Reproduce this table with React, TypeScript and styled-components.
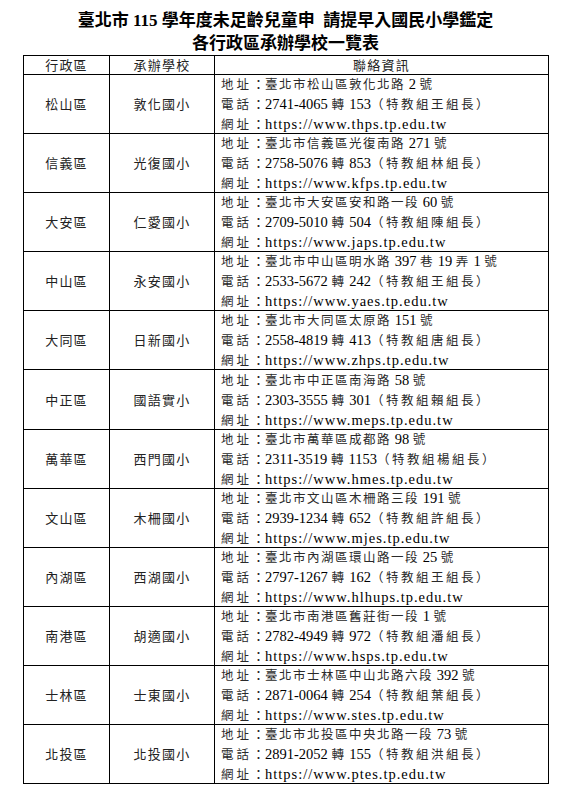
import React from "react";
import styled, { createGlobalStyle } from "styled-components";

const GlobalStyle = createGlobalStyle`
  html, body { margin: 0; padding: 0; background: #ffffff; }
  body { font-family: "Liberation Serif", "Noto Sans CJK TC", serif; color: #000; }
`;

const Page = styled.div`
  width: 525px;
  margin-left: 23px;
  padding-top: 9px;
`;

const Title = styled.h1`
  margin: 0;
  font-family: "Liberation Serif", "Noto Sans CJK TC", serif;
  font-size: 17px;
  line-height: 23px;
  font-weight: 700;
  text-align: center;
  color: #000;
  white-space: pre;
`;

const Grid = styled.div`
  display: grid;
  grid-template-columns: 86px 105px 334px;
  grid-template-rows: 19px;
  grid-auto-rows: 59.1px;
  border-top: 1px solid #000;
  border-left: 1px solid #000;
  box-sizing: border-box;
  width: 526px;
`;

const Cell = styled.div<{ $align?: "center" | "left" }>`
  box-sizing: border-box;
  border-right: 1px solid #000;
  border-bottom: 1px solid #000;
  display: flex;
  flex-direction: column;
  justify-content: center;
  align-items: ${(p) => (p.$align === "left" ? "flex-start" : "center")};
  padding-left: ${(p) => (p.$align === "left" ? "6px" : "0")};
  min-width: 0;
`;

const HeadText = styled.span`
  font-family: "Noto Sans CJK TC", sans-serif;
  font-size: 13px;
  line-height: 16px;
  letter-spacing: 1.2px;
  color: #222;
`;

const NameText = styled.span`
  font-family: "Noto Sans CJK TC", sans-serif;
  font-size: 13px;
  line-height: 16px;
  letter-spacing: 1.2px;
  color: #222;
`;

const Line = styled.div`
  font-family: "Liberation Serif", "Noto Sans CJK TC", serif;
  font-size: 14.5px;
  line-height: 19px;
  color: #000;
  white-space: pre;
`;

const Cjk = styled.span<{ $spacing?: number }>`
  font-family: "Noto Sans CJK TC", sans-serif;
  font-size: 12.5px;
  letter-spacing: ${(p) => p.$spacing ?? 1.5}px;
  color: #2a2a2a;
`;

const Label = styled.span`
  font-family: "Noto Sans CJK TC", sans-serif;
  font-size: 12.5px;
  letter-spacing: 3px;
  color: #2a2a2a;
`;

const Colon = styled.span`
  font-family: "Noto Sans CJK TC", sans-serif;
  font-size: 13px;
  color: #222;
`;

const Url = styled.span`
  letter-spacing: 1px;
  color: #000;
`;

const Note = styled.span`
  font-family: "Noto Sans CJK TC", sans-serif;
  font-size: 12.5px;
  letter-spacing: 2.5px;
  color: #2a2a2a;
`;

type Row = {
  district: string;
  school: string;
  address: string;
  phone: string;
  ext: string;
  contact: string;
  url: string;
};

const rows: Row[] = [
  { district: "松山區", school: "敦化國小", address: "臺北市松山區敦化北路 2 號", phone: "2741-4065", ext: "153", contact: "（特教組王組長）", url: "https://www.thps.tp.edu.tw" },
  { district: "信義區", school: "光復國小", address: "臺北市信義區光復南路 271 號", phone: "2758-5076", ext: "853", contact: "（特教組林組長）", url: "https://www.kfps.tp.edu.tw" },
  { district: "大安區", school: "仁愛國小", address: "臺北市大安區安和路一段 60 號", phone: "2709-5010", ext: "504", contact: "（特教組陳組長）", url: "https://www.japs.tp.edu.tw" },
  { district: "中山區", school: "永安國小", address: "臺北市中山區明水路 397 巷 19 弄 1 號", phone: "2533-5672", ext: "242", contact: "（特教組王組長）", url: "https://www.yaes.tp.edu.tw" },
  { district: "大同區", school: "日新國小", address: "臺北市大同區太原路 151 號", phone: "2558-4819", ext: "413", contact: "（特教組唐組長）", url: "https://www.zhps.tp.edu.tw" },
  { district: "中正區", school: "國語實小", address: "臺北市中正區南海路 58 號", phone: "2303-3555", ext: "301", contact: "（特教組賴組長）", url: "https://www.meps.tp.edu.tw" },
  { district: "萬華區", school: "西門國小", address: "臺北市萬華區成都路 98 號", phone: "2311-3519", ext: "1153", contact: "（特教組楊組長）", url: "https://www.hmes.tp.edu.tw" },
  { district: "文山區", school: "木柵國小", address: "臺北市文山區木柵路三段 191 號", phone: "2939-1234", ext: "652", contact: "（特教組許組長）", url: "https://www.mjes.tp.edu.tw" },
  { district: "內湖區", school: "西湖國小", address: "臺北市內湖區環山路一段 25 號", phone: "2797-1267", ext: "162", contact: "（特教組王組長）", url: "https://www.hlhups.tp.edu.tw" },
  { district: "南港區", school: "胡適國小", address: "臺北市南港區舊莊街一段 1 號", phone: "2782-4949", ext: "972", contact: "（特教組潘組長）", url: "https://www.hsps.tp.edu.tw" },
  { district: "士林區", school: "士東國小", address: "臺北市士林區中山北路六段 392 號", phone: "2871-0064", ext: "254", contact: "（特教組葉組長）", url: "https://www.stes.tp.edu.tw" },
  { district: "北投區", school: "北投國小", address: "臺北市北投區中央北路一段 73 號", phone: "2891-2052", ext: "155", contact: "（特教組洪組長）", url: "https://www.ptes.tp.edu.tw" },
];

const cjkRe = /([\u3000-\u9fff\uff00-\uffef]+)/;

function Mixed({ text }: { text: string }) {
  const parts = text.split(cjkRe).filter((s) => s.length > 0);
  return (
    <>
      {parts.map((p, i) =>
        cjkRe.test(p) ? <Cjk key={i}>{p}</Cjk> : <React.Fragment key={i}>{p}</React.Fragment>
      )}
    </>
  );
}

export default function App() {
  return (
    <>
      <GlobalStyle />
      <Page>
        <Title>{"臺北市 115 學年度未足齡兒童申  請提早入國民小學鑑定"}</Title>
        <Title>各行政區承辦學校一覽表</Title>
        <Grid>
          <Cell><HeadText>行政區</HeadText></Cell>
          <Cell><HeadText>承辦學校</HeadText></Cell>
          <Cell><HeadText>聯絡資訊</HeadText></Cell>
          {rows.map((r) => (
            <React.Fragment key={r.district}>
              <Cell><NameText>{r.district}</NameText></Cell>
              <Cell><NameText>{r.school}</NameText></Cell>
              <Cell $align="left">
                <Line>
                  <Label>地址</Label><Colon>：</Colon><Mixed text={r.address} />
                </Line>
                <Line>
                  <Label>電話</Label><Colon>：</Colon>{r.phone} <Cjk>轉</Cjk> {r.ext}<Note>{r.contact}</Note>
                </Line>
                <Line>
                  <Label>網址</Label><Colon>：</Colon><Url>{r.url}</Url>
                </Line>
              </Cell>
            </React.Fragment>
          ))}
        </Grid>
      </Page>
    </>
  );
}
